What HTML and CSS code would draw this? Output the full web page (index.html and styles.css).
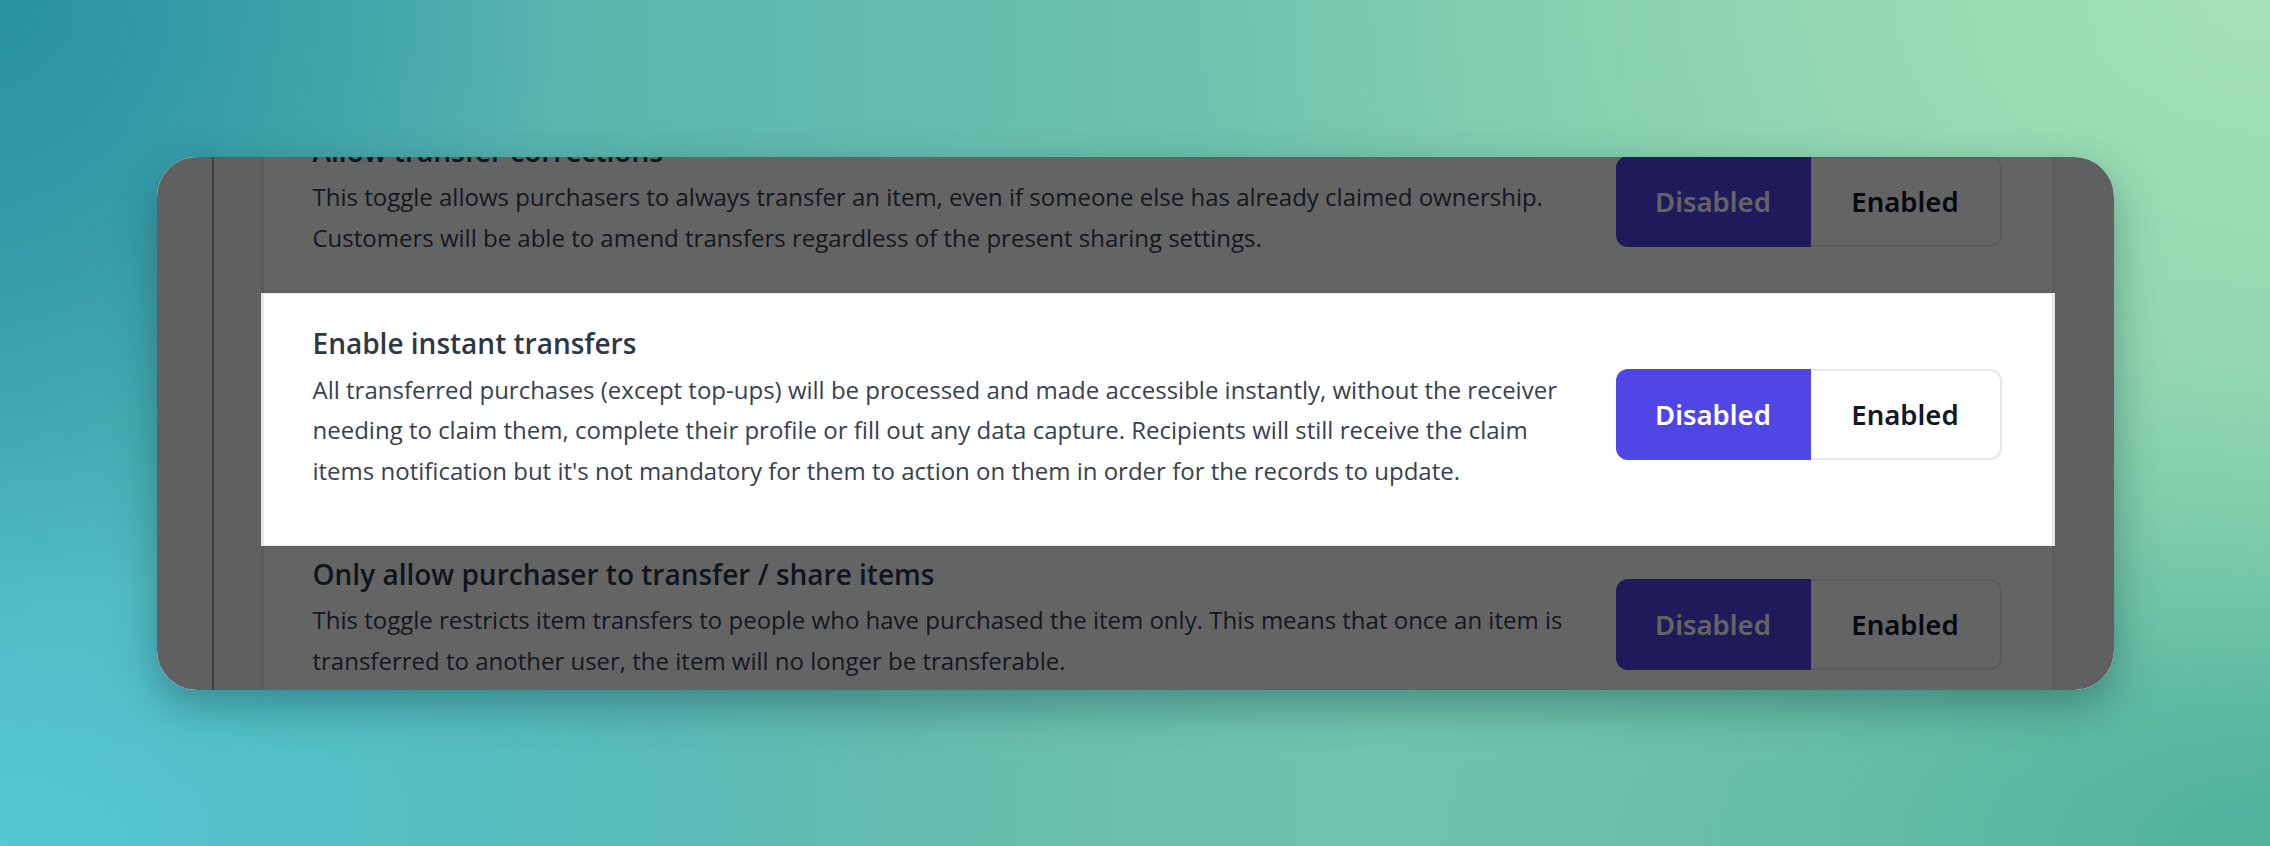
FILE: index.html
```html
<!DOCTYPE html>
<html lang="en">
<head>
<meta charset="utf-8">
<title>Transfer settings</title>
<link rel="stylesheet" href="styles.css">
</head>
<body>
<div class="stage">
  <div class="window">
    <div class="sidebar"></div>
    <div class="divider"></div>
    <div class="gutter"></div>
    <div class="card">
      <div class="row row-first">
        <div class="text">
          <h3 class="title">Allow transfer corrections</h3>
          <p class="desc">This toggle allows purchasers to always transfer an item, even if someone else has already claimed ownership. Customers will be able to amend transfers regardless of the present sharing settings.</p>
        </div>
        <div class="toggle">
          <span class="seg seg-on">Disabled</span>
          <span class="seg seg-off">Enabled</span>
        </div>
      </div>
      <div class="row row-focus">
        <div class="text">
          <h3 class="title">Enable instant transfers</h3>
          <p class="desc">All transferred purchases (except top-ups) will be processed and made accessible instantly, without the receiver needing to claim them, complete their profile or fill out any data capture. Recipients will still receive the claim items notification but it's not mandatory for them to action on them in order for the records to update.</p>
        </div>
        <div class="toggle">
          <span class="seg seg-on">Disabled</span>
          <span class="seg seg-off">Enabled</span>
        </div>
      </div>
      <div class="row row-last">
        <div class="text">
          <h3 class="title">Only allow purchaser to transfer / share items</h3>
          <p class="desc">This toggle restricts item transfers to people who have purchased the item only. This means that once an item is transferred to another user, the item will no longer be transferable.</p>
        </div>
        <div class="toggle">
          <span class="seg seg-on">Disabled</span>
          <span class="seg seg-off">Enabled</span>
        </div>
      </div>
    </div>
    <div class="aside"></div>
    <div class="overlay"></div>
  </div>
</div>
</body>
</html>
```

FILE: styles.css
```css
* { box-sizing: border-box; }

html, body {
  margin: 0;
  padding: 0;
}

body {
  width: 2270px;
  height: 846px;
  overflow: hidden;
  font-family: "Open Sans", "Noto Sans", sans-serif;
  background:
    radial-gradient(ellipse 560px 600px at 0% 0%, #2891a2 0%, rgba(40,145,162,0) 100%),
    radial-gradient(ellipse 1100px 700px at 100% 0%, #a3e1b6 0%, rgba(163,225,182,0) 100%),
    radial-gradient(ellipse 900px 600px at 0% 100%, #56c9d5 0%, rgba(86,201,213,0) 100%),
    radial-gradient(ellipse 900px 500px at 100% 100%, #4db19c 0%, rgba(77,177,156,0) 100%),
    linear-gradient(90deg, #48aab0 0%, #6cc1ad 50%, #86d0ad 100%);
}

.stage {
  height: 846px;
  display: flex;
  align-items: center;
  justify-content: center;
}

.window {
  position: relative;
  width: 1957px;
  height: 533px;
  border-radius: 40px;
  overflow: hidden;
  background: #f3f4f6;
  display: grid;
  grid-template-columns: 55px 2px 47px 1794px 59px;
  box-shadow: 0 16px 44px rgba(10, 50, 60, 0.38);
}

.sidebar, .gutter, .aside {
  background: #f3f4f6;
}

.divider {
  background: #9ca3af;
}

.card {
  background: #ffffff;
  border-left: 3px solid #e5e7eb;
  border-right: 3px solid #e5e7eb;
  display: flex;
  flex-direction: column;
}

.row {
  display: flex;
  align-items: center;
  padding-left: 49px;
  padding-right: 50px;
}

.row-first {
  margin-top: -26px;
  padding-bottom: 34.5px;
}

.row-focus {
  position: relative;
  z-index: 2;
  background: #ffffff;
  margin: 0 -3px;
  border-left: 3px solid #e5e7eb;
  border-right: 3px solid #e5e7eb;
  border-top: 1px solid #e5e7eb;
  border-bottom: 1px solid #e5e7eb;
  padding-top: 29.75px;
  padding-bottom: 53.25px;
}

.row-last {
  padding-top: 8px;
}

.text {
  width: 1265px;
  flex-shrink: 0;
  margin-right: 38px;
}

.title {
  margin: 0;
  font-size: 28px;
  line-height: 40.5px;
  font-weight: 600;
  color: #2d3748;
}

.desc {
  margin: 6px 0 0 0;
  font-size: 24px;
  line-height: 40.5px;
  font-weight: 400;
  color: #374151;
}

.toggle {
  display: flex;
  flex-shrink: 0;
  width: 386px;
  height: 91px;
  margin-top: 15px;
  border-radius: 12px;
}

.seg {
  display: flex;
  align-items: center;
  justify-content: center;
  font-family: "Noto Sans", "Open Sans", sans-serif;
  font-size: 27.5px;
  font-weight: 600;
  height: 100%;
}

.seg-on {
  width: 195px;
  background: #4f46e5;
  color: #ffffff;
  border-radius: 12px 0 0 12px;
}

.seg-off {
  width: 191px;
  background: #ffffff;
  color: #111827;
  border: 2px solid #e5e7eb;
  border-left: none;
  border-radius: 0 12px 12px 0;
}

.overlay {
  position: absolute;
  inset: 0;
  z-index: 1;
  background: rgba(0, 0, 0, 0.607);
}
```
